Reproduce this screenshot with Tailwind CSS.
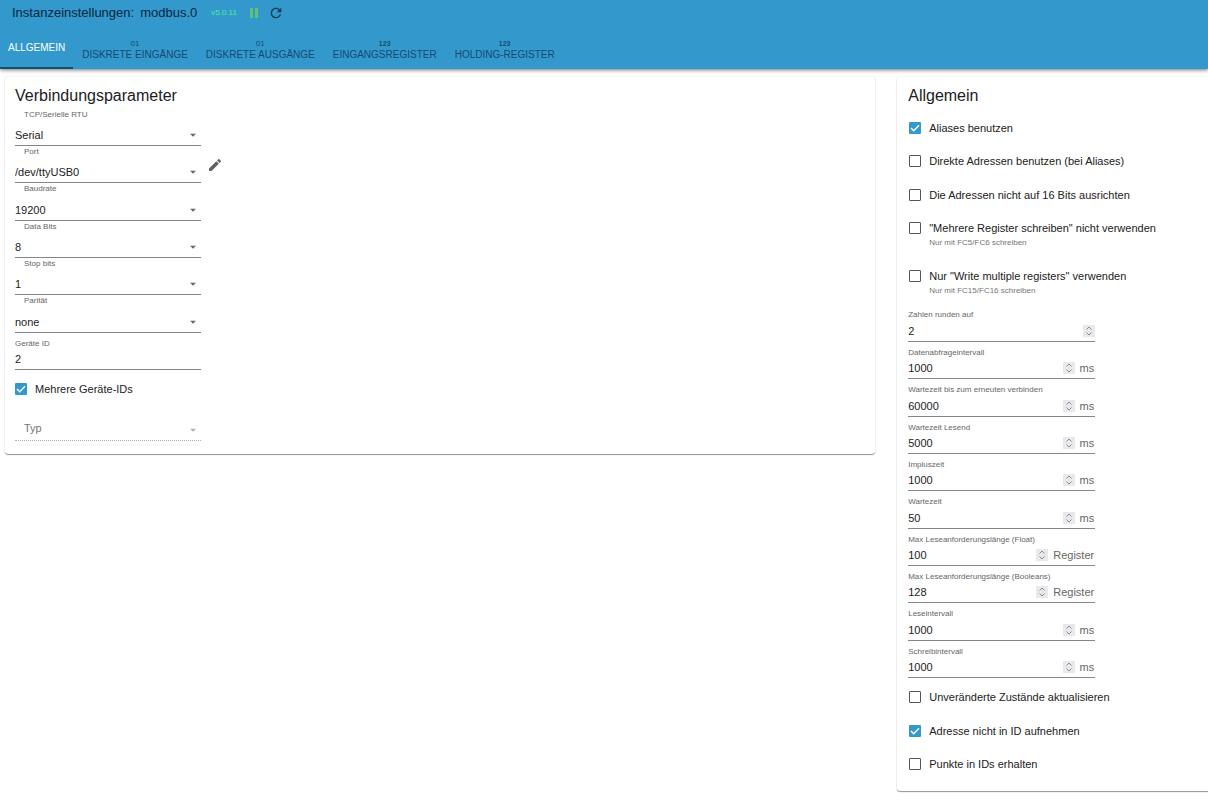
<!DOCTYPE html>
<html lang="de">
<head>
<meta charset="utf-8">
<title>Instanzeinstellungen: modbus.0</title>
<script src="https://cdn.jsdelivr.net/npm/@tailwindcss/browser@4"></script>
</head>
<body class="min-h-screen bg-white font-['Liberation_Sans',Arial,sans-serif] text-[11px] leading-3 text-[#212121]">
<svg class="hidden">
  <symbol id="arrow" viewBox="0 0 24 24"><path fill="currentColor" d="M7 10l5 5 5-5z"/></symbol>
  <symbol id="spin" viewBox="0 0 12 12"><path fill="none" stroke="currentColor" d="M3.500 4.500 6 2l2.500 2.500M3.500 7.500 6 10l2.500-2.500"/></symbol>
</svg>

<header class="relative bg-[#3399cc] text-[#0d2f4a] shadow-[0_1px_4px_rgba(0,0,0,0.55)]">
  <div class="flex h-[26px] items-center pl-3">
    <h1 class="flex gap-[6px] text-[13px] leading-4 text-[#06263d]"><span>Instanzeinstellungen:</span><span>modbus.0</span></h1>
    <span class="ml-[14px] text-[8px] text-[#4bef9b]">v5.0.11</span>
    <button type="button" aria-label="Anhalten" class="ml-[11px] text-[#62bf78]">
      <svg class="block h-3 w-3" viewBox="0 0 12 12" fill="currentColor"><path d="M2 1h3v10H2zM7 1h3v10H7z"/></svg>
    </button>
    <button type="button" aria-label="Neu laden" class="ml-2 text-[#123a57]">
      <svg class="block h-4 w-4" viewBox="0 0 24 24" fill="currentColor"><path d="M17.650 6.350C16.200 4.900 14.210 4 12 4c-4.420 0-7.990 3.580-7.990 8s3.570 8 7.990 8c3.730 0 6.840-2.550 7.730-6h-2.080c-.82 2.330-3.040 4-5.650 4-3.310 0-6-2.690-6-6s2.690-6 6-6c1.660 0 3.140.69 4.220 1.780L13 11h7V4z"/></svg>
    </button>
  </div>
  <nav role="tablist" class="flex h-[43px] text-[10px] leading-3 text-[#144a70]">
    <button type="button" role="tab" aria-selected="true" class="border-b-2 border-[#164d73] px-2 pt-[3px] text-white">ALLGEMEIN</button>
    <button type="button" role="tab" class="flex flex-col items-center px-[9px] pt-3"><span class="text-[8px] leading-[11px]">01</span>DISKRETE EINGÄNGE</button>
    <button type="button" role="tab" class="flex flex-col items-center px-[9px] pt-3"><span class="text-[8px] leading-[11px]">01</span>DISKRETE AUSGÄNGE</button>
    <button type="button" role="tab" class="flex flex-col items-center px-[9px] pt-3"><span class="text-[7px] leading-[11px] font-bold">123</span>EINGANGSREGISTER</button>
    <button type="button" role="tab" class="flex flex-col items-center px-[9px] pt-3"><span class="text-[7px] leading-[11px] font-bold">123</span>HOLDING-REGISTER</button>
  </nav>
</header>

<main class="grid grid-cols-[minmax(0,14fr)_minmax(0,5fr)] items-start gap-[22px] pt-2 pl-[5px]">
  <section class="rounded-[3px] px-[10px] pt-[11px] pb-[13px] shadow-[0_1px_1px_rgba(0,0,0,0.4),0_0_2px_rgba(0,0,0,0.12)]">
    <h2 class="text-[16px] leading-4">Verbindungsparameter</h2>
    <div class="flex">
      <div class="w-[186px] [&_label]:block [&_label]:pt-px [&_label]:pl-[9px] [&_label]:text-[8px] [&_label]:leading-[10px] [&_label]:text-[#666] [&_select]:w-full [&_select]:appearance-none [&_select]:bg-transparent [&_svg]:pointer-events-none [&_svg]:-ml-[15px] [&_svg]:h-[14px] [&_svg]:w-[14px] [&_svg]:shrink-0 [&_svg]:text-[#666]">
        <div class="flex h-[42px] flex-col justify-between border-b border-[#868686] pt-[5px]">
          <label for="type">TCP/Serielle RTU</label>
          <div class="flex h-5 items-center"><select id="type"><option>Serial</option></select><svg><use href="#arrow"/></svg></div>
        </div>
        <div class="flex h-[37px] flex-col justify-between border-b border-[#868686]">
          <label for="port">Port</label>
          <div class="flex h-5 items-center"><select id="port"><option>/dev/ttyUSB0</option></select><svg><use href="#arrow"/></svg></div>
        </div>
        <div class="flex h-[38px] flex-col justify-between border-b border-[#868686]">
          <label for="baud">Baudrate</label>
          <div class="flex h-5 items-center"><select id="baud"><option>19200</option></select><svg><use href="#arrow"/></svg></div>
        </div>
        <div class="flex h-[37px] flex-col justify-between border-b border-[#868686]">
          <label for="data">Data Bits</label>
          <div class="flex h-5 items-center"><select id="data"><option>8</option></select><svg><use href="#arrow"/></svg></div>
        </div>
        <div class="flex h-[37px] flex-col justify-between border-b border-[#868686]">
          <label for="stop">Stop bits</label>
          <div class="flex h-5 items-center"><select id="stop"><option>1</option></select><svg><use href="#arrow"/></svg></div>
        </div>
        <div class="flex h-[38px] flex-col justify-between border-b border-[#868686]">
          <label for="parity">Parität</label>
          <div class="flex h-5 items-center"><select id="parity"><option>none</option></select><svg><use href="#arrow"/></svg></div>
        </div>
      </div>
      <button type="button" aria-label="Port bearbeiten" class="mt-[53px] ml-[6px] self-start text-[#616161]">
        <svg class="block h-4 w-4" viewBox="0 0 24 24" fill="currentColor"><path d="M3 17.250V21h3.750L17.810 9.940l-3.750-3.750zM20.710 7.040c.39-.39.39-1.020 0-1.410l-2.340-2.340c-.39-.39-1.020-.39-1.410 0l-1.830 1.830 3.750 3.750z"/></svg>
      </button>
    </div>
    <div class="flex h-[37px] w-[186px] flex-col justify-between border-b border-[#868686] pt-[6px]">
      <label for="devid" class="text-[8px] leading-[10px] text-[#666]">Geräte ID</label>
      <input id="devid" type="text" value="2" class="h-5 w-full bg-transparent outline-none">
    </div>
    <label class="mt-3 flex items-center gap-2 leading-[14px]">
      <span class="grid h-3 w-3"><input type="checkbox" checked class="col-start-1 row-start-1 h-3 w-3 appearance-none rounded-[1px] bg-[#3399cc]"><svg class="pointer-events-none col-start-1 row-start-1 h-3 w-3" viewBox="0 0 12 12" fill="none" stroke="#fff" stroke-width="1.400"><path d="M2 6l2.700 2.700L10 3.300"/></svg></span>Mehrere Geräte-IDs
    </label>
    <div class="mt-6 flex h-[21px] w-[186px] items-center border-b border-dotted border-[#b0b0b0] text-[#757575]">
      <label for="typ" class="pb-1 pl-[9px] leading-[14px]">Typ</label>
      <select id="typ" disabled class="h-4 min-w-0 flex-1 appearance-none"><option></option></select>
      <svg class="mr-px h-[14px] w-[14px] shrink-0 text-[#b0b0b0]"><use href="#arrow"/></svg>
    </div>
  </section>

  <section class="rounded-l-[3px] pt-[11px] pr-[10px] pb-[21px] pl-[11px] shadow-[0_1px_1px_rgba(0,0,0,0.4),0_0_2px_rgba(0,0,0,0.12)]">
    <h2 class="text-[16px] leading-4">Allgemein</h2>
    <div class="mt-[18px] ml-px [&_label]:flex [&_label]:items-start [&_label]:gap-2 [&_label]:leading-3">
      <label class="h-[33px]"><span class="grid h-3 w-3"><input type="checkbox" checked class="col-start-1 row-start-1 h-3 w-3 appearance-none rounded-[1px] bg-[#3399cc]"><svg class="pointer-events-none col-start-1 row-start-1 h-3 w-3" viewBox="0 0 12 12" fill="none" stroke="#fff" stroke-width="1.400"><path d="M2 6l2.700 2.700L10 3.300"/></svg></span>Aliases benutzen</label>
      <label class="h-[34px]"><input type="checkbox" class="h-3 w-3 appearance-none rounded-[1px] border border-[#555]">Direkte Adressen benutzen (bei Aliases)</label>
      <label class="h-[33px]"><input type="checkbox" class="h-3 w-3 appearance-none rounded-[1px] border border-[#555]">Die Adressen nicht auf 16 Bits ausrichten</label>
      <label class="h-[48px]"><input type="checkbox" class="h-3 w-3 shrink-0 appearance-none rounded-[1px] border border-[#555]"><span>"Mehrere Register schreiben" nicht verwenden<small class="mt-1 block text-[8px] leading-[10px] text-[#757575]">Nur mit FC5/FC6 schreiben</small></span></label>
      <label class="h-[40px]"><input type="checkbox" class="h-3 w-3 shrink-0 appearance-none rounded-[1px] border border-[#555]"><span>Nur "Write multiple registers" verwenden<small class="mt-1 block text-[8px] leading-[10px] text-[#757575]">Nur mit FC15/FC16 schreiben</small></span></label>
    </div>

    <div class="w-[187px] [&_input]:min-w-0 [&_input]:flex-1 [&_input]:appearance-none [&_input]:bg-transparent [&_input]:outline-none [&_input]:[-moz-appearance:textfield] [&_input::-webkit-inner-spin-button]:appearance-none [&_label]:text-[8px] [&_label]:leading-[10px] [&_label]:text-[#666] [&_svg]:h-3 [&_svg]:w-3 [&_svg]:shrink-0 [&_svg]:bg-[#e9e9ed] [&_svg]:text-[#8a8a90] [&_span]:pl-[5px] [&_span]:pr-px [&_span]:text-[#666]">
      <div class="flex h-8 flex-col justify-between border-b border-[#868686]">
        <label for="round">Zahlen runden auf</label>
        <div class="flex h-5 items-center"><input id="round" type="number" value="2"><svg><use href="#spin"/></svg></div>
      </div>
      <div class="flex h-[37px] flex-col justify-between border-b border-[#868686] pt-[6px]">
        <label for="poll">Datenabfrageintervall</label>
        <div class="flex h-5 items-center"><input id="poll" type="number" value="1000"><svg><use href="#spin"/></svg><span>ms</span></div>
      </div>
      <div class="flex h-[38px] flex-col justify-between border-b border-[#868686] pt-[6px]">
        <label for="recon">Wartezeit bis zum erneuten verbinden</label>
        <div class="flex h-5 items-center"><input id="recon" type="number" value="60000"><svg><use href="#spin"/></svg><span>ms</span></div>
      </div>
      <div class="flex h-[37px] flex-col justify-between border-b border-[#868686] pt-[6px]">
        <label for="timeout">Wartezeit Lesend</label>
        <div class="flex h-5 items-center"><input id="timeout" type="number" value="5000"><svg><use href="#spin"/></svg><span>ms</span></div>
      </div>
      <div class="flex h-[37px] flex-col justify-between border-b border-[#868686] pt-[6px]">
        <label for="pulse">Impluszeit</label>
        <div class="flex h-5 items-center"><input id="pulse" type="number" value="1000"><svg><use href="#spin"/></svg><span>ms</span></div>
      </div>
      <div class="flex h-[38px] flex-col justify-between border-b border-[#868686] pt-[6px]">
        <label for="wait">Wartezeit</label>
        <div class="flex h-5 items-center"><input id="wait" type="number" value="50"><svg><use href="#spin"/></svg><span>ms</span></div>
      </div>
      <div class="flex h-[37px] flex-col justify-between border-b border-[#868686] pt-[6px]">
        <label for="maxf">Max Leseanforderungslänge (Float)</label>
        <div class="flex h-5 items-center"><input id="maxf" type="number" value="100"><svg><use href="#spin"/></svg><span>Register</span></div>
      </div>
      <div class="flex h-[37px] flex-col justify-between border-b border-[#868686] pt-[6px]">
        <label for="maxb">Max Leseanforderungslänge (Booleans)</label>
        <div class="flex h-5 items-center"><input id="maxb" type="number" value="128"><svg><use href="#spin"/></svg><span>Register</span></div>
      </div>
      <div class="flex h-[38px] flex-col justify-between border-b border-[#868686] pt-[6px]">
        <label for="read">Leseintervall</label>
        <div class="flex h-5 items-center"><input id="read" type="number" value="1000"><svg><use href="#spin"/></svg><span>ms</span></div>
      </div>
      <div class="flex h-[37px] flex-col justify-between border-b border-[#868686] pt-[6px]">
        <label for="write">Schreibintervall</label>
        <div class="flex h-5 items-center"><input id="write" type="number" value="1000"><svg><use href="#spin"/></svg><span>ms</span></div>
      </div>
    </div>

    <div class="mt-[13px] ml-px [&_label]:flex [&_label]:items-start [&_label]:gap-2 [&_label]:leading-3">
      <label class="h-[34px]"><input type="checkbox" class="h-3 w-3 appearance-none rounded-[1px] border border-[#555]">Unveränderte Zustände aktualisieren</label>
      <label class="h-[33px]"><span class="grid h-3 w-3"><input type="checkbox" checked class="col-start-1 row-start-1 h-3 w-3 appearance-none rounded-[1px] bg-[#3399cc]"><svg class="pointer-events-none col-start-1 row-start-1 h-3 w-3" viewBox="0 0 12 12" fill="none" stroke="#fff" stroke-width="1.400"><path d="M2 6l2.700 2.700L10 3.300"/></svg></span>Adresse nicht in ID aufnehmen</label>
      <label><input type="checkbox" class="h-3 w-3 appearance-none rounded-[1px] border border-[#555]">Punkte in IDs erhalten</label>
    </div>
  </section>
</main>
</body>
</html>
